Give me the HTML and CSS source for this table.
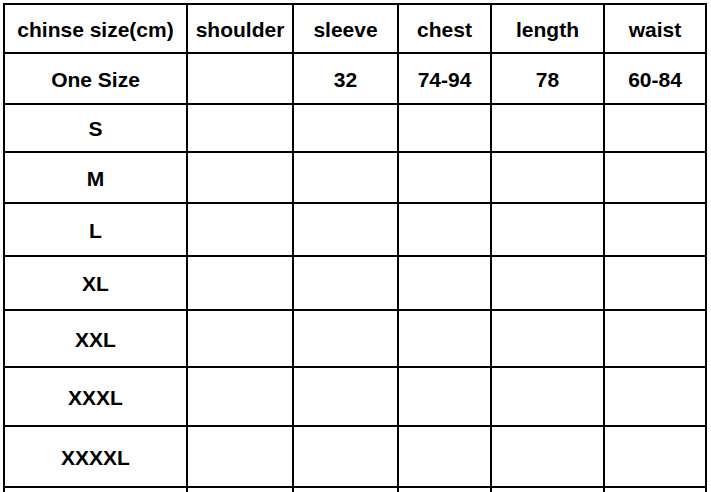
FILE: index.html
```html
<!DOCTYPE html>
<html>
<head>
<meta charset="utf-8">
<link rel="stylesheet" href="styles.css">
</head>
<body>
<div class="sheet">
  <div class="grid">
    <div class="cell">chinse size(cm)</div>
    <div class="cell">shoulder</div>
    <div class="cell">sleeve</div>
    <div class="cell">chest</div>
    <div class="cell">length</div>
    <div class="cell">waist</div>

    <div class="cell">One Size</div>
    <div class="cell"></div>
    <div class="cell">32</div>
    <div class="cell">74-94</div>
    <div class="cell">78</div>
    <div class="cell">60-84</div>

    <div class="cell">S</div><div class="cell"></div><div class="cell"></div><div class="cell"></div><div class="cell"></div><div class="cell"></div>
    <div class="cell">M</div><div class="cell"></div><div class="cell"></div><div class="cell"></div><div class="cell"></div><div class="cell"></div>
    <div class="cell">L</div><div class="cell"></div><div class="cell"></div><div class="cell"></div><div class="cell"></div><div class="cell"></div>
    <div class="cell">XL</div><div class="cell"></div><div class="cell"></div><div class="cell"></div><div class="cell"></div><div class="cell"></div>
    <div class="cell">XXL</div><div class="cell"></div><div class="cell"></div><div class="cell"></div><div class="cell"></div><div class="cell"></div>
    <div class="cell">XXXL</div><div class="cell"></div><div class="cell"></div><div class="cell"></div><div class="cell"></div><div class="cell"></div>
    <div class="cell">XXXXL</div><div class="cell"></div><div class="cell"></div><div class="cell"></div><div class="cell"></div><div class="cell"></div>
    <div class="cell"></div><div class="cell"></div><div class="cell"></div><div class="cell"></div><div class="cell"></div><div class="cell"></div>
  </div>
</div>
</body>
</html>
```
FILE: styles.css
```css
html, body {
  margin: 0;
  padding: 0;
  background: #fff;
  overflow: hidden;
  width: 711px;
  height: 492px;
}
.sheet {
  padding: 3px 0 0 3px;
}
.grid {
  display: grid;
  grid-template-columns: 181px 104px 103px 91px 111px 100px;
  grid-template-rows: 47px 49px 46px 49px 51px 52px 55px 57px 59px 4px;
  gap: 2px;
  padding: 2px 2px 0 2px;
  background: #000;
  width: max-content;
}
.cell {
  background: #fff;
  display: flex;
  align-items: center;
  justify-content: center;
  font-family: "Liberation Sans", Arial, sans-serif;
  font-weight: bold;
  font-size: 21px;
  color: #000;
  padding-top: 2px;
  white-space: nowrap;
  overflow: hidden;
}
```
